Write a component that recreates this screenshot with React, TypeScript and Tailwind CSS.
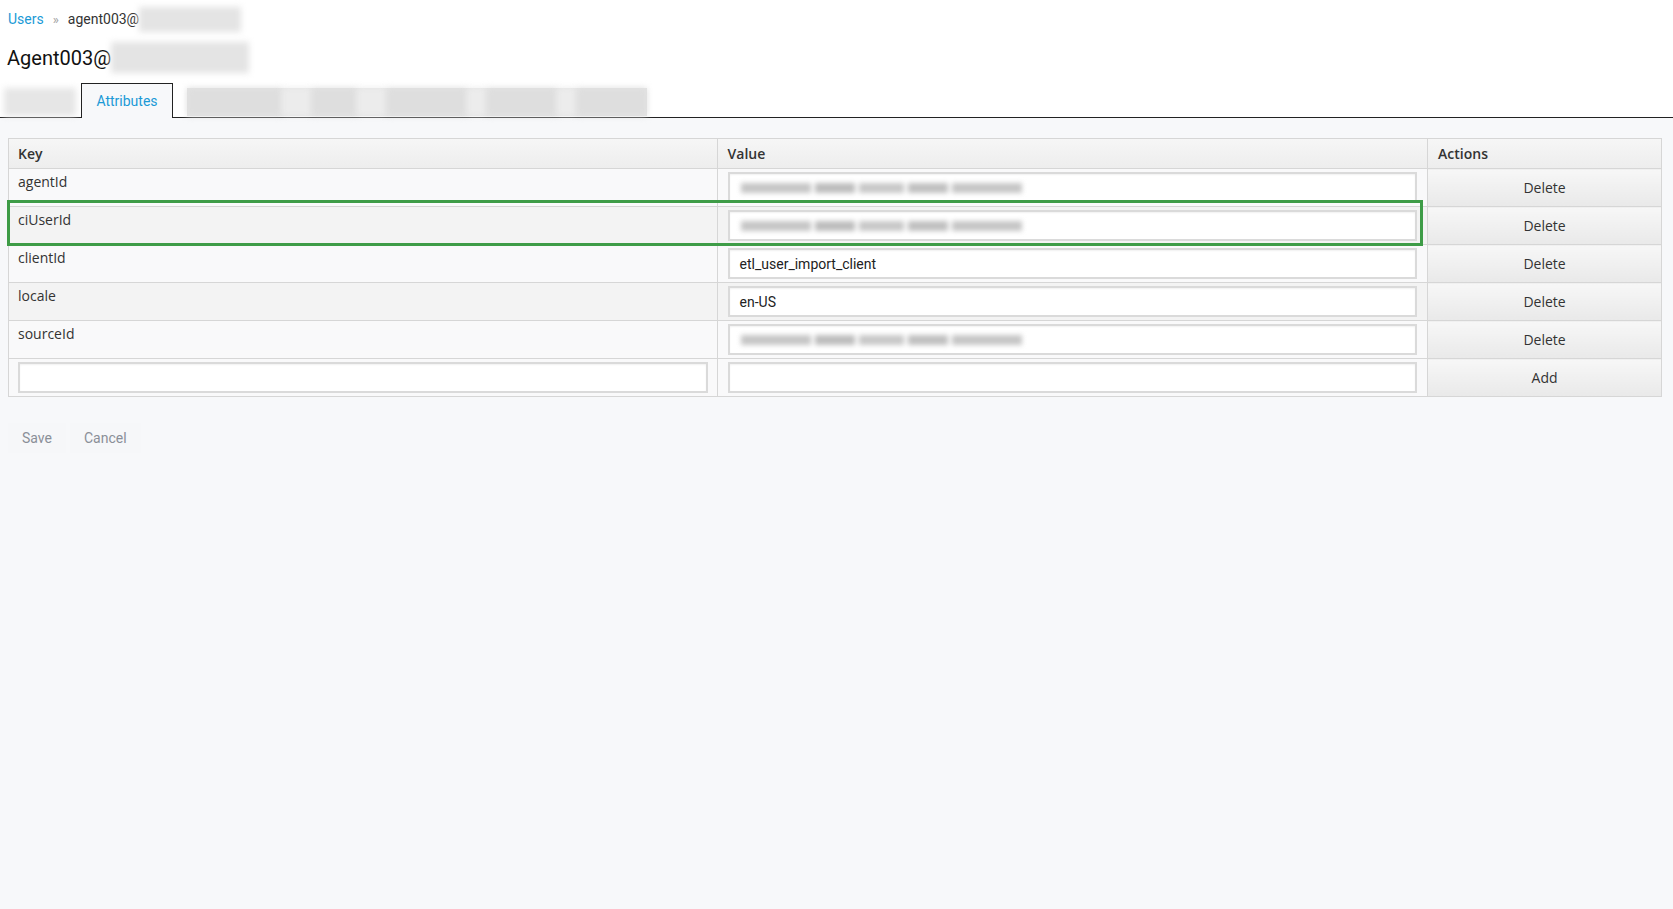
import React from 'react';

type Attr = { key: string; value: string; blurred?: boolean };

const attrs: Attr[] = [
  { key: 'agentId', value: '', blurred: true },
  { key: 'ciUserId', value: '', blurred: true },
  { key: 'clientId', value: 'etl_user_import_client' },
  { key: 'locale', value: 'en-US' },
  { key: 'sourceId', value: '', blurred: true },
];

const Blur = ({ className }: { className: string }) => (
  <div className={`bg-[#dedede] blur-[3px] ${className}`} />
);

const ValueInput = ({ attr }: { attr?: Attr }) => (
  <div className="relative h-[31px] w-full border-2 border-[#dadada] bg-white shadow-[inset_0_1px_2px_rgba(0,0,0,0.06)]">
    {attr?.blurred ? (
      <div className="absolute left-[11px] top-[9px] flex h-[10px] w-[285px] gap-[4px] blur-[2.5px]">
        <div className="h-full w-[70px] bg-[#c6c6c6]" />
        <div className="h-full w-[40px] bg-[#bdbdbd]" />
        <div className="h-full w-[45px] bg-[#c8c8c8]" />
        <div className="h-full w-[40px] bg-[#c0c0c0]" />
        <div className="h-full w-[70px] bg-[#c6c6c6]" />
      </div>
    ) : (
      <span className="absolute left-[10px] top-[4px] text-[14px] text-[#222] font-['Roboto',sans-serif]">{attr?.value}</span>
    )}
  </div>
);

export default function App() {
  return (
    <div className="min-h-[909px] w-[1673px] bg-[#f7f8fa] font-['Roboto',sans-serif]">
      {/* Header */}
      <div className="bg-white pt-[7px]">
        <div className="flex h-[25px] items-center pl-[8px] text-[14px]">
          <span className="text-[#1b9ad6]">Users</span>
          <span className="mx-[9px] text-[13px] text-[#a0a0a0]">»</span>
          <span className="text-[#333]">agent003@</span>
          <Blur className="h-[25px] w-[102px] bg-[#e4e4e4] blur-[2px]" />
        </div>
        <div className="mt-[10px] flex h-[31px] items-center pl-[7px] text-[20px] text-[#111]">
          <span>Agent003@</span>
          <Blur className="h-[31px] w-[138px] bg-[#e4e4e4] blur-[2px]" />
        </div>
        <div className="mt-[10px] flex h-[35px] items-end border-b border-[#222]">
          <Blur className="mb-[1px] ml-[4px] h-[28px] w-[72px] bg-[#e6e6e6]" />
          <div className="relative -mb-[1px] ml-[5px] flex h-[35px] w-[92px] items-center justify-center border border-b-0 border-[#222] bg-[#f7f8fa] text-[14px] text-[#1b9ad6]">
            Attributes
          </div>
          <div className="mb-[1px] ml-[14px] flex h-[28px] w-[460px] bg-[#e4e4e4]">
            <Blur className="h-full w-[95px] bg-[#d6d6d6]" />
            <Blur className="h-full w-[30px] bg-[#ececec]" />
            <Blur className="h-full w-[45px] bg-[#d8d8d8]" />
            <Blur className="h-full w-[30px] bg-[#ececec]" />
            <Blur className="h-full w-[80px] bg-[#d8d8d8]" />
            <Blur className="h-full w-[20px] bg-[#ececec]" />
            <Blur className="h-full w-[70px] bg-[#d9d9d9]" />
            <Blur className="h-full w-[20px] bg-[#ececec]" />
            <Blur className="h-full w-[70px] bg-[#dadada]" />
          </div>
        </div>
      </div>

      {/* Table */}
      <div className="relative ml-[8px] mt-[20px] w-[1654px]">
        <table className="w-full border-collapse border border-[#d6d6d6] text-[14px] text-[#333] font-['Open_Sans',sans-serif]">
          <colgroup>
            <col className="w-[709px]" />
            <col className="w-[711px]" />
            <col className="w-[234px]" />
          </colgroup>
          <thead>
            <tr className="h-[30px] bg-gradient-to-b from-[#f6f6f6] to-[#ededed]">
              <th className="border border-[#d6d6d6] px-[9px] text-left font-semibold">Key</th>
              <th className="border border-[#d6d6d6] px-[10px] text-left font-semibold">Value</th>
              <th className="border border-[#d6d6d6] px-[10px] text-left font-semibold">Actions</th>
            </tr>
          </thead>
          <tbody>
            {attrs.map((a, i) => (
              <tr key={a.key} className={`h-[38px] ${i % 2 === 1 ? 'bg-[#f3f3f3]' : 'bg-[#f9f9fa]'}`}>
                <td className="border border-[#d6d6d6] px-[9px] pb-[13px] pt-[2px] align-top">{a.key}</td>
                <td className="border border-[#d6d6d6] px-[10px] py-[2px]">
                  <ValueInput attr={a} />
                </td>
                <td className="border border-[#d6d6d6] bg-gradient-to-b from-[#f7f7f7] to-[#e9e9e9] p-0 text-center">
                  <button className="h-[37px] w-full text-[14px] text-[#333]">Delete</button>
                </td>
              </tr>
            ))}
            <tr className="h-[38px] bg-[#f9f9fa]">
              <td className="border border-[#d6d6d6] px-[9px] py-[2px]">
                <ValueInput />
              </td>
              <td className="border border-[#d6d6d6] px-[10px] py-[2px]">
                <ValueInput />
              </td>
              <td className="border border-[#d6d6d6] bg-gradient-to-b from-[#f7f7f7] to-[#e9e9e9] p-0 text-center">
                <button className="h-[37px] w-full text-[14px] text-[#333]">Add</button>
              </td>
            </tr>
          </tbody>
        </table>
        {/* highlight */}
        <div className="pointer-events-none absolute left-[-1px] top-[62px] h-[46px] w-[1416px] border-[3px] border-[#3e9c47]" />
      </div>

      {/* Footer buttons */}
      <div className="ml-[8px] mt-[26px] flex text-[14px] text-[#8a8f98]">
        <button className="h-[30px] bg-[#f6f7f9] px-[14px]">Save</button>
        <button className="h-[30px] bg-[#f6f7f9] px-[14px] ml-[4px]">Cancel</button>
      </div>
    </div>
  );
}
